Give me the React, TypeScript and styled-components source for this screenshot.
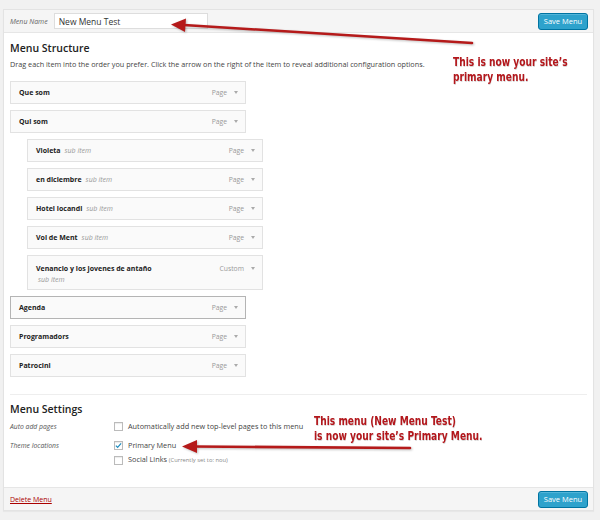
import React from "react";
import styled, { createGlobalStyle } from "styled-components";

const Global = createGlobalStyle`
  html, body { margin: 0; padding: 0; background: #f1f1f1; }
  body { font-family: "Open Sans", "Liberation Sans", sans-serif; color: #444; }
  * { box-sizing: border-box; }
`;

const Page = styled.div`
  position: relative;
  width: 600px;
  height: 520px;
  padding: 9px 6px 0 3px;
  overflow: hidden;
`;

const Panel = styled.div`
  background: #fff;
  border: 1px solid #e3e3e3;
  box-shadow: 0 1px 1px rgba(0,0,0,0.04);
  display: flex;
  flex-direction: column;
  height: 502px;
`;

const Bar = styled.div<{ $top?: boolean }>`
  background: #f5f5f5;
  display: flex;
  align-items: center;
  justify-content: space-between;
  height: 23px;
  padding: 0 5px 0 6px;
  ${(p) => (p.$top ? "border-bottom: 1px solid #e6e6e6;" : "border-top: 1px solid #e6e6e6;")}
`;

const NameGroup = styled.div`
  display: flex;
  align-items: center;
  gap: 6px;
`;

const NameLabel = styled.span`
  font-style: italic;
  font-size: 7px;
  color: #666;
`;

const NameInput = styled.div`
  width: 154px;
  height: 16px;
  background: #fff;
  border: 1px solid #ddd;
  font-size: 8.5px;
  color: #333;
  padding: 0 4px;
  display: flex;
  align-items: center;
`;

const SaveButton = styled.button`
  width: 50px;
  height: 17px;
  background: #2ea2cc;
  border: 1px solid #0074a2;
  border-radius: 3px;
  color: #fff;
  font-family: "Open Sans", sans-serif;
  font-size: 7.5px;
  padding: 0;
  box-shadow: inset 0 1px 0 rgba(120,200,230,0.5);
`;

const Body = styled.div`
  flex: 1;
  padding: 8px 6px 0 6px;
  display: flex;
  flex-direction: column;
`;

const Heading = styled.h3`
  margin: 0;
  font-size: 10.5px;
  font-weight: 600;
  color: #222;
  line-height: 14px;
`;

const Desc = styled.p`
  margin: 4px 0 0;
  font-size: 7.25px;
  line-height: 10px;
  color: #444;
  white-space: nowrap;
`;

const ItemList = styled.div`
  margin-top: 12px;
  display: flex;
  flex-direction: column;
  gap: 6px;
`;

const Item = styled.div<{ $sub?: boolean; $tall?: boolean; $active?: boolean }>`
  width: 236px;
  margin-left: ${(p) => (p.$sub ? 17 : 0)}px;
  height: ${(p) => (p.$tall ? 35 : 23)}px;
  background: #fafafa;
  border: 1px solid ${(p) => (p.$active ? "#b4b4b4" : "#e2e2e2")};
  display: flex;
  align-items: ${(p) => (p.$tall ? "flex-start" : "center")};
  justify-content: space-between;
  padding: ${(p) => (p.$tall ? "7px" : "0")} 7px 0 8px;
`;

const ItemTitle = styled.div`
  font-size: 7px;
  font-weight: 700;
  color: #222;
  line-height: 11px;
`;

const SubNote = styled.span<{ $block?: boolean }>`
  font-weight: 400;
  font-style: italic;
  color: #999;
  margin-left: ${(p) => (p.$block ? "2px" : "4px")};
  display: ${(p) => (p.$block ? "block" : "inline")};
`;

const ItemMeta = styled.div`
  display: flex;
  align-items: center;
  gap: 7px;
  font-size: 6.8px;
  color: #999;
  line-height: 11px;
`;

const Caret = styled.span`
  width: 0;
  height: 0;
  border-left: 2.5px solid transparent;
  border-right: 2.5px solid transparent;
  border-top: 3px solid #aaa;
`;

const Settings = styled.div`
  margin-top: 17px;
  border-top: 1px solid #eee;
  padding-top: 7px;
`;

const SettingRow = styled.div<{ $first?: boolean }>`
  display: flex;
  margin-top: ${(p) => (p.$first ? 5 : 8)}px;
`;

const SettingLabel = styled.div`
  width: 104px;
  font-size: 6.8px;
  font-style: italic;
  color: #555;
  line-height: 11px;
`;

const Options = styled.div`
  display: flex;
  flex-direction: column;
  gap: 3px;
`;

const Option = styled.label`
  display: flex;
  align-items: center;
  gap: 5px;
  font-size: 7.3px;
  color: #444;
  line-height: 11px;
`;

const Box = styled.span`
  width: 9px;
  height: 9px;
  border: 1px solid #bbb;
  background: #fff;
  box-shadow: inset 0 1px 1px rgba(0,0,0,0.08);
  display: flex;
  align-items: center;
  justify-content: center;
`;

const Small = styled.span`
  font-size: 5.8px;
  color: #888;
`;

const DeleteLink = styled.a`
  font-size: 7px;
  color: #a00;
  text-decoration: underline;
`;

const Overlay = styled.svg`
  position: absolute;
  left: 0;
  top: 0;
  pointer-events: none;
  filter: drop-shadow(1px 1px 1px rgba(0,0,0,0.25));
`;

const Note = styled.div<{ $x: number; $y: number }>`
  position: absolute;
  left: ${(p) => p.$x}px;
  top: ${(p) => p.$y}px;
  font-family: "DejaVu Sans Condensed", "Liberation Sans", sans-serif;
  font-weight: 700;
  font-size: 12.8px;
  line-height: 15px;
  color: #b3161b;
  white-space: nowrap;
  transform: scaleX(0.79);
  transform-origin: left top;
  text-shadow: 0.5px 0.5px 0.5px rgba(0,0,0,0.15);
`;

type MI = { title: string; type: string; sub?: boolean; tall?: boolean; active?: boolean };

const items: MI[] = [
  { title: "Que som", type: "Page" },
  { title: "Qui som", type: "Page" },
  { title: "Violeta", type: "Page", sub: true },
  { title: "en diciembre", type: "Page", sub: true },
  { title: "Hotel locandi", type: "Page", sub: true },
  { title: "Vol de Ment", type: "Page", sub: true },
  { title: "Venancio y los jovenes de antaño", type: "Custom", sub: true, tall: true },
  { title: "Agenda", type: "Page", active: true },
  { title: "Programadors", type: "Page" },
  { title: "Patrocini", type: "Page" },
];

const Check = () => (
  <svg width="8" height="7" viewBox="0 0 8 7">
    <path d="M1 3.6 L3 5.6 L7 1" fill="none" stroke="#1e8cbe" strokeWidth="1.4" />
  </svg>
);

export default function App() {
  return (
    <Page>
      <Global />
      <Panel>
        <Bar $top>
          <NameGroup>
            <NameLabel>Menu Name</NameLabel>
            <NameInput>New Menu Test</NameInput>
          </NameGroup>
          <SaveButton>Save Menu</SaveButton>
        </Bar>
        <Body>
          <Heading>Menu Structure</Heading>
          <Desc>
            Drag each item into the order you prefer. Click the arrow on the right of the item to reveal additional configuration options.
          </Desc>
          <ItemList>
            {items.map((it) => (
              <Item key={it.title} $sub={it.sub} $tall={it.tall} $active={it.active}>
                <ItemTitle>
                  {it.title}
                  {it.sub && <SubNote $block={it.tall}>sub item</SubNote>}
                </ItemTitle>
                <ItemMeta>
                  {it.type}
                  <Caret />
                </ItemMeta>
              </Item>
            ))}
          </ItemList>
          <Settings>
            <Heading>Menu Settings</Heading>
            <SettingRow $first>
              <SettingLabel>Auto add pages</SettingLabel>
              <Options>
                <Option>
                  <Box />
                  Automatically add new top-level pages to this menu
                </Option>
              </Options>
            </SettingRow>
            <SettingRow>
              <SettingLabel>Theme locations</SettingLabel>
              <Options>
                <Option>
                  <Box>
                    <Check />
                  </Box>
                  Primary Menu
                </Option>
                <Option>
                  <Box />
                  <span>
                    Social Links <Small>(Currently set to: nou)</Small>
                  </span>
                </Option>
              </Options>
            </SettingRow>
          </Settings>
        </Body>
        <Bar>
          <DeleteLink>Delete Menu</DeleteLink>
          <SaveButton>Save Menu</SaveButton>
        </Bar>
      </Panel>
      <Note $x={453} $y={54}>
        This is now your site’s
        <br />
        primary menu.
      </Note>
      <Note $x={314} $y={413}>
        This menu (New Menu Test)
        <br />
        is now your site’s Primary Menu.
      </Note>
      <Overlay width="600" height="520" viewBox="0 0 600 520">
        <line x1="472" y1="43" x2="184" y2="25" stroke="#b51a1a" strokeWidth="2.6" strokeLinecap="round" />
        <polygon points="171,24.5 186,18.5 185,32" fill="#b51a1a" />
        <line x1="410" y1="448" x2="194" y2="446.5" stroke="#b51a1a" strokeWidth="2.6" strokeLinecap="round" />
        <polygon points="182,446.5 197,440 197,453" fill="#b51a1a" />
      </Overlay>
    </Page>
  );
}
